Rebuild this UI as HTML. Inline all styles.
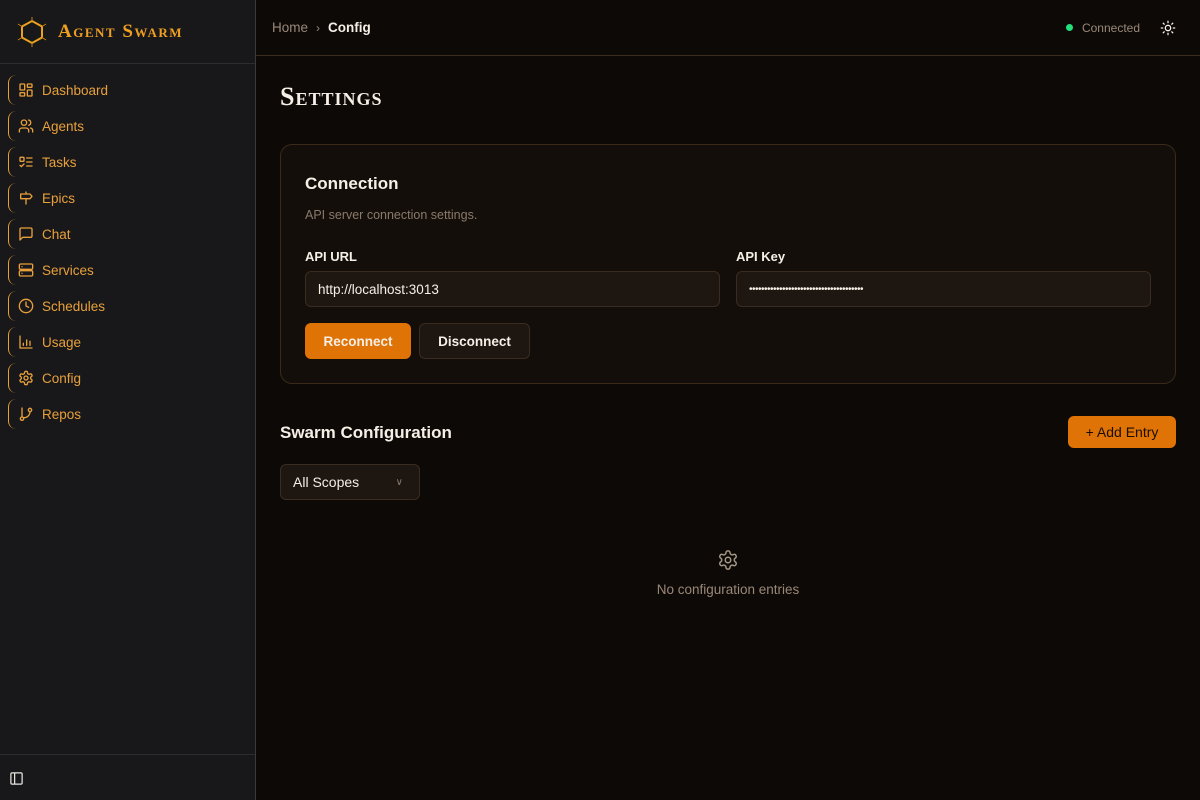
<!DOCTYPE html>
<html><head><meta charset="utf-8"><style>
*{box-sizing:border-box;margin:0;padding:0}
body{width:1200px;height:800px;background:#0d0906;font-family:"Liberation Sans",sans-serif;overflow:hidden;position:relative;color:#f5efe6}
.sb{position:absolute;left:0;top:0;width:256px;height:800px;background:#18181b;border-right:1px solid #3a3a3e}
.logo{height:64px;border-bottom:1px solid #2c2c30;display:flex;align-items:center;padding-left:16px}
.logo span{font-family:"Liberation Serif",serif;color:#f0a020;font-size:19px;font-weight:bold;margin-left:10px;letter-spacing:1.5px;font-variant:small-caps}
.nav{padding-top:8px}
.it{position:relative;height:36px;display:flex;align-items:center;padding-left:18px;color:#e8a03a;font-size:13.5px}
.it:before{content:"";position:absolute;left:8px;top:3px;bottom:3px;width:8px;border-left:1.5px solid #e8a030;border-radius:8px 0 0 8px}
.it svg{width:16px;height:16px;margin-right:8px;stroke:#e8a03a;fill:none;stroke-width:2;stroke-linecap:round;stroke-linejoin:round}
.foot{position:absolute;bottom:0;left:0;right:0;height:46px;border-top:1px solid #2c2c30}
.hd{position:absolute;left:256px;right:0;top:0;height:56px;border-bottom:1px solid #3a2c1e;display:flex;align-items:center;padding-left:16px;font-size:13.5px}
.main{position:absolute;left:280px;top:0;width:896px}
h1{position:absolute;top:82px;font-family:"Liberation Serif",serif;font-size:26px;font-weight:bold;font-variant:small-caps;letter-spacing:1px}
.card{position:absolute;top:144px;left:0;width:896px;height:240px;background:#140e0a;border:1px solid #3a2a1a;border-radius:12px}
.lab{position:absolute;font-size:14px;font-weight:bold}
.inp{position:absolute;height:36px;background:#1e1611;border:1px solid #3a2c20;border-radius:6px;font-size:13.5px;padding-left:12px;display:flex;align-items:center}
.btn{position:absolute;height:36px;border-radius:6px;font-size:13.5px;font-weight:bold;display:flex;align-items:center;justify-content:center}
</style></head><body>
<div class="sb">
<div class="logo"><svg width="32" height="32" viewBox="0 0 32 32" fill="none" stroke="#c8820c" stroke-width="1.5"><polygon points="16,5 26,10.5 26,21.5 16,27 6,21.5 6,10.5" stroke-width="2" stroke="#e8a020"/><path d="M16 1v4M16 27v4M2 8l4 2.5M30 8l-4 2.5M2 24l4-2.5M30 24l-4-2.5" stroke-width="1"/></svg><span>Agent Swarm</span></div>
<div class="nav">
<div class="it"><svg viewBox="0 0 24 24"><rect x="3" y="3" width="7" height="9" rx="1"/><rect x="14" y="3" width="7" height="5" rx="1"/><rect x="14" y="12" width="7" height="9" rx="1"/><rect x="3" y="16" width="7" height="5" rx="1"/></svg>Dashboard</div>
<div class="it"><svg viewBox="0 0 24 24"><path d="M16 21v-2a4 4 0 0 0-4-4H6a4 4 0 0 0-4 4v2"/><circle cx="9" cy="7" r="4"/><path d="M22 21v-2a4 4 0 0 0-3-3.9M16 3.1a4 4 0 0 1 0 7.8"/></svg>Agents</div>
<div class="it"><svg viewBox="0 0 24 24"><rect x="3" y="5" width="6" height="6" rx="1"/><path d="m3 17 2 2 4-4M13 6h8M13 12h8M13 18h8"/></svg>Tasks</div>
<div class="it"><svg viewBox="0 0 24 24"><path d="M12 13v8M12 3v3M18 6H4v7h14l3-3.5z"/></svg>Epics</div>
<div class="it"><svg viewBox="0 0 24 24"><path d="M21 15a2 2 0 0 1-2 2H7l-4 4V5a2 2 0 0 1 2-2h14a2 2 0 0 1 2 2z"/></svg>Chat</div>
<div class="it"><svg viewBox="0 0 24 24"><rect x="2" y="3" width="20" height="8" rx="2"/><rect x="2" y="13" width="20" height="8" rx="2"/><path d="M6 7h.01M6 17h.01"/></svg>Services</div>
<div class="it"><svg viewBox="0 0 24 24"><circle cx="12" cy="12" r="10"/><path d="M12 6v6l4 2"/></svg>Schedules</div>
<div class="it"><svg viewBox="0 0 24 24"><path d="M3 3v18h18M8 17v-3M13 17V9M18 17v-6"/></svg>Usage</div>
<div class="it"><svg viewBox="0 0 24 24"><path d="M12.22 2h-.44a2 2 0 0 0-2 2v.18a2 2 0 0 1-1 1.73l-.43.25a2 2 0 0 1-2 0l-.15-.08a2 2 0 0 0-2.73.73l-.22.38a2 2 0 0 0 .73 2.730l.15.1a2 2 0 0 1 1 1.72v.51a2 2 0 0 1-1 1.74l-.15.09a2 2 0 0 0-.73 2.73l.22.38a2 2 0 0 0 2.73.73l.15-.08a2 2 0 0 1 2 0l.43.25a2 2 0 0 1 1 1.73V20a2 2 0 0 0 2 2h.44a2 2 0 0 0 2-2v-.18a2 2 0 0 1 1-1.73l.43-.25a2 2 0 0 1 2 0l.15.08a2 2 0 0 0 2.73-.73l.22-.39a2 2 0 0 0-.73-2.73l-.15-.08a2 2 0 0 1-1-1.74v-.5a2 2 0 0 1 1-1.74l.15-.09a2 2 0 0 0 .73-2.73l-.22-.38a2 2 0 0 0-2.73-.73l-.15.08a2 2 0 0 1-2 0l-.43-.25a2 2 0 0 1-1-1.73V4a2 2 0 0 0-2-2z"/><circle cx="12" cy="12" r="3"/></svg>Config</div>
<div class="it"><svg viewBox="0 0 24 24"><circle cx="6" cy="19" r="2.5"/><circle cx="18" cy="6" r="2.5"/><path d="M6 3v13.5M18 8.5A9 9 0 0 1 9 17.5"/></svg>Repos</div>
</div>
<div class="foot"><svg style="position:absolute;left:9px;top:16px" width="15" height="15" viewBox="0 0 24 24" fill="none" stroke="#e8e4de" stroke-width="2"><rect x="3" y="3" width="18" height="18" rx="2"/><path d="M9 3v18"/></svg></div>
</div>
<div class="hd"><span style="color:#9a8878">Home</span><span style="color:#9a8878;margin:0 8px;font-size:12px">›</span><span style="font-weight:bold">Config</span>
<div style="position:absolute;right:60px;display:flex;align-items:center;font-size:12px;color:#9a8878"><span style="width:7px;height:7px;border-radius:50%;background:#22e07a;margin-right:9px"></span>Connected</div>
<svg style="position:absolute;right:24px" width="16" height="16" viewBox="0 0 24 24" fill="none" stroke="#f5efe6" stroke-width="2" stroke-linecap="round"><circle cx="12" cy="12" r="4"/><path d="M12 2v2M12 20v2M4.9 4.9l1.4 1.4M17.7 17.7l1.4 1.4M2 12h2M20 12h2M6.3 17.7l-1.4 1.4M19.1 4.9l-1.4 1.4"/></svg></div>
<div class="main">
<h1>Settings</h1>
<div class="card">
<div class="lab" style="left:24px;top:29px;font-size:17px">Connection</div>
<div style="position:absolute;left:24px;top:63px;font-size:12.5px;color:#8a7a6a">API server connection settings.</div>
<div class="lab" style="left:24px;top:104px;font-size:13px">API URL</div>
<div class="lab" style="left:455px;top:104px;font-size:13px">API Key</div>
<div class="inp" style="left:24px;top:126px;width:415px">http://localhost:3013</div>
<div class="inp" style="left:455px;top:126px;width:415px;font-size:10px;letter-spacing:-0.5px">••••••••••••••••••••••••••••••••••••••</div>
<div class="btn" style="left:24px;top:178px;width:106px;background:#e07306">Reconnect</div>
<div class="btn" style="left:138px;top:178px;width:111px;background:#1e1611;border:1px solid #3a2c20">Disconnect</div>
</div>
<div class="lab" style="top:423px;font-size:17px">Swarm Configuration</div>
<div class="btn" style="left:788px;top:416px;width:108px;height:32px;background:#e07306;color:#1a0e04;font-weight:normal;font-size:14px">+ Add Entry</div>
<div class="inp" style="left:0;top:464px;width:140px;font-size:14px">All Scopes<span style="position:absolute;right:16px;color:#8a7a6a;font-size:10px">∨</span></div>
<svg style="position:absolute;left:437px;top:549px" width="22" height="22" viewBox="0 0 24 24" fill="none" stroke="#a89888" stroke-width="1.6"><path d="M12.22 2h-.44a2 2 0 0 0-2 2v.18a2 2 0 0 1-1 1.73l-.43.25a2 2 0 0 1-2 0l-.15-.08a2 2 0 0 0-2.73.73l-.22.38a2 2 0 0 0 .73 2.73l.15.1a2 2 0 0 1 1 1.72v.51a2 2 0 0 1-1 1.74l-.15.09a2 2 0 0 0-.73 2.73l.22.38a2 2 0 0 0 2.73.73l.15-.08a2 2 0 0 1 2 0l.43.25a2 2 0 0 1 1 1.73V20a2 2 0 0 0 2 2h.44a2 2 0 0 0 2-2v-.18a2 2 0 0 1 1-1.73l.43-.25a2 2 0 0 1 2 0l.15.08a2 2 0 0 0 2.73-.73l.22-.39a2 2 0 0 0-.73-2.73l-.15-.08a2 2 0 0 1-1-1.74v-.5a2 2 0 0 1 1-1.74l.15-.09a2 2 0 0 0 .73-2.73l-.22-.38a2 2 0 0 0-2.73-.73l-.15.08a2 2 0 0 1-2 0l-.43-.25a2 2 0 0 1-1-1.73V4a2 2 0 0 0-2-2z"/><circle cx="12" cy="12" r="3"/></svg>
<div style="position:absolute;left:0;width:896px;top:582px;text-align:center;font-size:13.5px;color:#9a8878">No configuration entries</div>
</div>
</body></html>
